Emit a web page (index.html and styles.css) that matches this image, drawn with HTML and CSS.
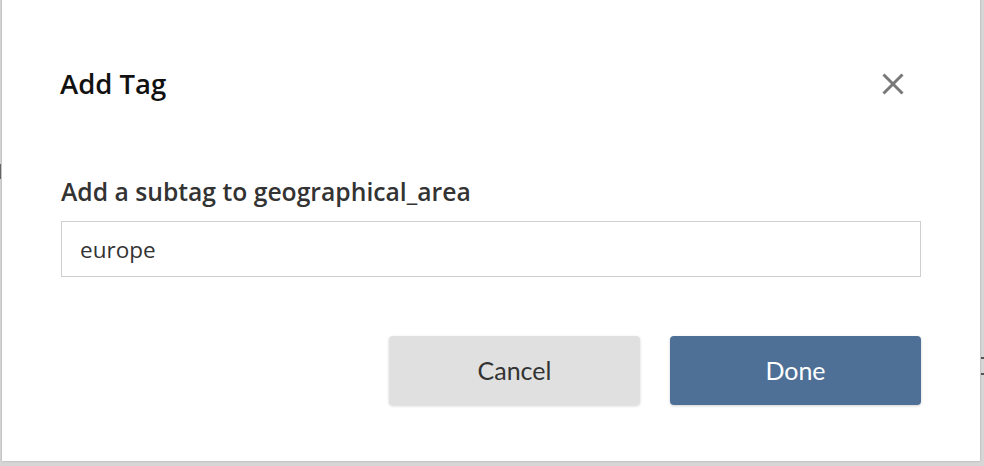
FILE: index.html
```html
<!DOCTYPE html>
<html>
<head>
<meta charset="utf-8">
<link rel="stylesheet" href="styles.css">
</head>
<body>
<div class="backdrop">
  <span class="behind behind-left"></span>
  <span class="behind behind-right-a"></span>
  <span class="behind behind-right-b"></span>
  <div class="modal">
    <div class="modal-header">
      <h2 class="modal-title">Add Tag</h2>
      <button class="close-btn" aria-label="Close">
        <svg width="22" height="22" viewBox="0 0 22 22"><path d="M1.5 1.5 L20.5 20.5 M20.5 1.5 L1.5 20.5" stroke="#787878" stroke-width="3" fill="none"/></svg>
      </button>
    </div>
    <div class="modal-body">
      <label class="field-label">Add a subtag to geographical_area</label>
      <div class="text-input">europe</div>
    </div>
    <div class="modal-footer">
      <button class="btn btn-cancel">Cancel</button>
      <button class="btn btn-done">Done</button>
    </div>
  </div>
</div>
</body>
</html>
```
FILE: styles.css
```css
html, body {
  margin: 0;
  padding: 0;
  height: 466px;
  overflow: hidden;
}
body {
  background: #d6d6d6;
  font-family: "Open Sans", "Noto Sans", sans-serif;
}
.backdrop {
  position: relative;
  height: 466px;
  padding-left: 2px;
}
.behind {
  position: absolute;
  background: #555;
}
.behind-left { left: 0; top: 164px; width: 1px; height: 15px; background: #666; }
.behind-right-a { right: 0; top: 357px; width: 3px; height: 2px; }
.behind-right-b { right: 0; top: 373px; width: 3px; height: 2px; }
.modal {
  position: relative;
  width: 978px;
  height: 461px;
  box-sizing: border-box;
  background: #fff;
  box-shadow: 0 0 2px rgba(0,0,0,0.25);
  padding: 60px 59px 56px 59px;
  display: flex;
  flex-direction: column;
}
.modal-header {
  height: 48px;
  display: flex;
  align-items: center;
  justify-content: space-between;
}
.modal-title {
  margin: 0 0 0 -1px;
  font-size: 27.5px;
  line-height: 1;
  font-weight: 600;
  color: #111;
}
.close-btn {
  border: 0;
  background: none;
  padding: 0;
  margin: 0 17px 0 0;
  width: 22px;
  height: 22px;
  display: flex;
}
.modal-body {
  margin-top: 68px;
  display: flex;
  flex-direction: column;
}
.field-label {
  font-size: 24.7px;
  line-height: 32px;
  font-weight: 600;
  color: #333;
  padding-left: 0;
}
.text-input {
  margin-top: 13px;
  height: 56px;
  box-sizing: border-box;
  border: 1px solid #cfcfcf;
  padding: 0 18px;
  font-size: 22.5px;
  color: #333;
  display: flex;
  align-items: center;
}
.modal-footer {
  margin-top: 59px;
  display: flex;
  justify-content: flex-end;
  gap: 30px;
}
.btn {
  width: 251px;
  height: 69px;
  border: 0;
  border-radius: 4px;
  font-family: "Lato", sans-serif;
  font-size: 25px;
  padding: 0 0 2px;
  box-shadow: 0 1px 3px rgba(0,0,0,0.18);
}
.btn-cancel {
  background: #e0e0e0;
  color: #333;
}
.btn-done {
  background: #4e6f96;
  color: #fff;
}
```
